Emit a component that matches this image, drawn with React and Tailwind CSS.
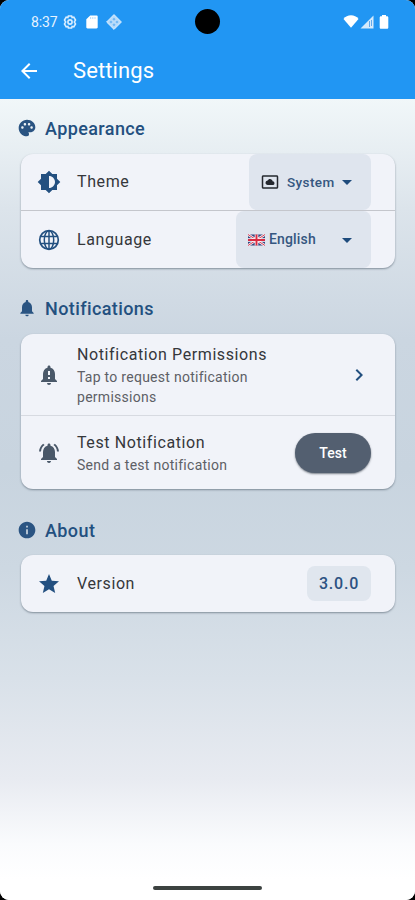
import {
  MdArrowBack, MdArrowDropDown, MdBrightness6, MdChevronRight, MdInfo,
  MdNotificationImportant, MdNotifications, MdNotificationsActive, MdPalette,
  MdSettingsSystemDaydream, MdStar,
} from "react-icons/md";

function StatusBar() {
  return (
    <div className="flex h-[43px] items-center pl-[31px] pr-[26px] text-white">
      <span className="w-[32px] text-[14px] leading-none tracking-[-0.1px] text-[#e6f3ff]">8:37</span>
      <svg className="h-[14px] w-[14px]" viewBox="0 0 14 14" fill="none" stroke="#d9edff">
        <path d="M5.4 1h3.2l.5 1.5 1.7-.3 1.7 2.9L11.3 7l1.2 1.9-1.7 2.9-1.7-.3-.5 1.5H5.4l-.5-1.5-1.7.3-1.7-2.9L2.7 7 1.5 5.1l1.7-2.9 1.7.3z" strokeWidth="1.6" />
        <circle cx="7" cy="7" r="2.1" strokeWidth="1.6" />
      </svg>
      <svg className="ml-[9px] h-[14px] w-[12px]" viewBox="0 0 12 14">
        <path d="M4.2.5h6.3c.7 0 1.2.5 1.2 1.2v10.6c0 .7-.5 1.2-1.2 1.2h-9c-.7 0-1.2-.5-1.2-1.2v-8z" fill="#fff" />
        <path d="M4.6 2v2M6.8 2v2M9 2v2" stroke="#a9d6fb" strokeWidth=".9" />
      </svg>
      <svg className="ml-[8px] h-[16px] w-[16px]" viewBox="0 0 16 16">
        <path d="M8 .6 15.4 8 8 15.4.6 8z" fill="#b9dcfa" stroke="#d9edff" strokeLinejoin="round" />
        <path d="M8 3.6 9.6 5.2 8 6.800 6.400 5.200zM5 6.400 6.600 8 5 9.600 3.400 8zM11 6.400 12.600 8 11 9.600 9.400 8zM8 9.200l1.600 1.600L8 12.400l-1.600-1.600z" fill="#70b7f5" />
      </svg>
      <svg className="ml-auto h-[13px] w-[16px]" viewBox="0 0 16 13">
        <path d="M8 12.7.5 4.1C2.300 1.300 5 .2 8 .2s5.700 1.100 7.500 3.900z" fill="#fff" />
      </svg>
      <svg className="ml-[1px] h-[14px] w-[14px]" viewBox="0 0 14 14">
        <path d="M13.500.5v13H.5z" fill="#d5eafc" />
        <path d="M9.500 6v6M11.500 5v6" stroke="#63a9ec" />
      </svg>
      <svg className="ml-[5px] h-[14px] w-[10px]" viewBox="0 0 10 14">
        <path d="M3 0h4v1.300h1c.7 0 1.300.5 1.300 1.200v10c0 .8-.5 1.300-1.300 1.300H2c-.8 0-1.300-.5-1.300-1.300v-10C.7 1.800 1.300 1.300 2 1.300h1z" fill="#fff" />
      </svg>
    </div>
  );
}

function UnionJack() {
  return (
    <svg className="h-[12px] w-[17px]" viewBox="0 0 17 12">
      <rect y=".5" width="17" height="11" rx="1" fill="#34477f" />
      <path d="M0 .5l17 11M17 .5l-17 11" stroke="#f3eef4" strokeWidth="2.600" />
      <path d="M0 .5l17 11M17 .5l-17 11" stroke="#d84256" strokeWidth="1" />
      <path d="M8.500.5v11M0 6h17" stroke="#fff" strokeWidth="3.600" />
      <path d="M8.500.5v11M0 6h17" stroke="#d92b43" strokeWidth="2" />
    </svg>
  );
}

function Globe({ className }) {
  return (
    <svg className={className} viewBox="0 0 24 24" fill="none" stroke="currentColor" strokeWidth="1.5">
      <circle cx="12" cy="12" r="9.300" strokeWidth="1.700" />
      <ellipse cx="12" cy="12" rx="4.700" ry="9.300" />
      <path d="M12 2.700v18.600M3.600 8.500h16.800M3.600 15.500h16.800" />
    </svg>
  );
}

function SectionTitle({ icon: Icon, children }) {
  return (
    <h2 className="flex h-[20px] items-center pl-[17px] text-[18px] font-medium tracking-[0.4px] text-[#23507f]">
      <Icon className="mr-[8px] size-[20px] shrink-0 text-[#2a5482]" />
      {children}
    </h2>
  );
}

function Card({ children }) {
  return (
    <section className="ml-[21px] mr-[20px] overflow-hidden rounded-[12px] bg-[#f1f3f9] shadow-[0_1px_2px_rgba(50,65,80,0.5)]">
      {children}
    </section>
  );
}

function Row({ icon: Icon, iconClass = "text-[#235080]", title, subtitle, className, children }) {
  return (
    <div className={"flex items-center pl-[16px] pr-[24px] " + className}>
      <Icon className={"mr-[16px] size-[24px] shrink-0 " + iconClass} />
      <div className="min-w-0 flex-1">
        <div className="whitespace-nowrap text-[16px] leading-[24px] tracking-[0.6px] text-[#35373b]">{title}</div>
        {subtitle && <div className="w-[200px] text-[14px] leading-[20px] tracking-[0.27px] text-[#5d6066]">{subtitle}</div>}
      </div>
      {children}
    </div>
  );
}

export default function App() {
  return (
    <div className="h-[900px] w-[415px] overflow-hidden bg-black font-[Roboto,sans-serif]">
      <div className="relative flex h-full flex-col overflow-hidden rounded-[9px] bg-white">
        <header className="h-[99px] shrink-0 bg-[#2196f3]">
          <StatusBar />
          <div className="flex h-[56px] items-center pl-[17px] text-white">
            <MdArrowBack className="size-[24px]" />
            <h1 className="ml-[32px] text-[22px] leading-none tracking-[0.1px]">Settings</h1>
          </div>
        </header>
        <div className="absolute left-[195px] top-[9px] size-[25px] rounded-full bg-black" />
        <main className="flex flex-1 flex-col bg-[linear-gradient(to_bottom,#f1f7f9_0px,#dce4eb_110px,#cbd6e1_240px,#c8d4df_370px,#cdd8e2_470px,#d9e1e9_580px,#e8ebf1_680px,#fafbfd_745px,#ffffff_780px)] pt-[19px]">
          <SectionTitle icon={MdPalette}>Appearance</SectionTitle>
          <div className="h-[16px]" />
          <Card>
            <Row icon={MdBrightness6} title="Theme" className="h-[56px]">
              <button className="flex h-[56px] w-[122px] items-center rounded-[8px] bg-[#dfe5ee] pl-[12px] text-[13.5px] font-medium tracking-[0.4px] text-[#355780]">
                <MdSettingsSystemDaydream className="mr-[8px] size-[18px] text-[#25282e]" />
                System
                <MdArrowDropDown className="ml-auto mr-[12px] size-[24px] text-[#1e4b7c]" />
              </button>
            </Row>
            <div className="h-px bg-[#c4c6cc]" />
            <Row icon={Globe} title="Language" className="h-[57px]">
              <button className="flex h-[57px] w-[135px] items-center rounded-[8px] bg-[#dfe5ee] pl-[12px] text-[14px] font-medium tracking-[0.15px] text-[#355780]">
                <span className="mr-[4px]"><UnionJack /></span>
                English
                <MdArrowDropDown className="ml-auto mr-[12px] size-[24px] text-[#1e4b7c]" />
              </button>
            </Row>
          </Card>
          <div className="h-[30px]" />
          <SectionTitle icon={MdNotifications}>Notifications</SectionTitle>
          <div className="h-[16px]" />
          <Card>
            <Row icon={MdNotificationImportant} iconClass="text-[#4a5869]" title="Notification Permissions" subtitle="Tap to request notification permissions" className="h-[81px]">
              <MdChevronRight className="size-[24px] text-[#23507f]" />
            </Row>
            <div className="h-px bg-[#d7dae1]" />
            <Row icon={MdNotificationsActive} iconClass="text-[#4a5869]" title="Test Notification" subtitle="Send a test notification" className="h-[73px]">
              <button className="h-[40px] w-[76px] rounded-full bg-[#535f70] pt-px text-[14px] font-medium tracking-[0.1px] text-white shadow-[0_1px_2px_rgba(40,50,60,0.6)]">Test</button>
            </Row>
          </Card>
          <div className="h-[31px]" />
          <SectionTitle icon={MdInfo}>About</SectionTitle>
          <div className="h-[15px]" />
          <Card>
            <Row icon={MdStar} title="Version" className="h-[57px]">
              <span className="flex h-[35px] w-[64px] items-center justify-center rounded-[8px] bg-[#e0e6ee] text-[16px] font-medium tracking-[0.8px] text-[#2c5282]">3.0.0</span>
            </Row>
          </Card>
          <div className="mx-auto mb-[10px] mt-auto h-[4px] w-[109px] rounded-full bg-[#3c4240]" />
        </main>
      </div>
    </div>
  );
}
